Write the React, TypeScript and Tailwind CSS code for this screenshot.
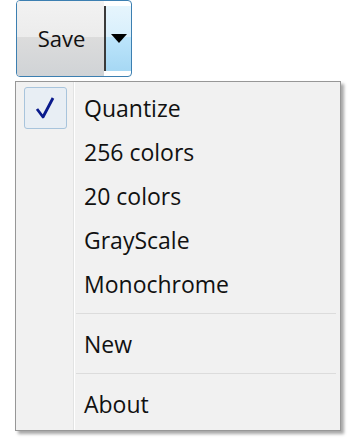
import React from "react";

const items = ["Quantize", "256 colors", "20 colors", "GrayScale", "Monochrome"];

function Item({ label, checked }: { label: string; checked?: boolean }) {
  return (
    <div className="flex h-[44px] items-center">
      <div className="flex w-[57px] shrink-0 items-center justify-center">
        {checked && (
          <div className="ml-[1px] flex h-[42px] w-[43px] items-center justify-center rounded-[3px] border border-[#a8c4dc] bg-[#e8eef4]">
            <svg width="20" height="24" viewBox="0 0 20 24">
              <path
                d="M2 13 L8 21 L18 2"
                fill="none"
                stroke="#0a1a8c"
                strokeWidth="2.8"
                strokeLinejoin="round"
              />
            </svg>
          </div>
        )}
      </div>
      <span className="pl-[11px] text-[23px] leading-none text-[#111]">{label}</span>
    </div>
  );
}

function Separator() {
  return (
    <div className="flex h-[16px] items-center pl-[60px] pr-[4px]">
      <div className="h-[2px] w-full border-t border-[#dcdcdc] border-b-white" />
    </div>
  );
}

export default function App() {
  return (
    <div
      className="relative h-[442px] w-[350px] bg-white"
      style={{ fontFamily: '"Open Sans", "Noto Sans", sans-serif' }}
    >
      <div className="ml-[16px] flex h-[77px] w-[116px] overflow-hidden rounded-[4px] border border-[#3c7fb1] shadow-[inset_0_0_0_1px_rgba(255,255,255,0.7)]">
        <div className="flex w-[87px] items-center justify-center bg-[linear-gradient(to_bottom,#f2f2f2_0%,#ececec_48%,#dcdcdc_48%,#d0d3d6_100%)] pl-[2px] text-[22px] text-[#111]">
          Save
        </div>
        <div className="flex flex-1 items-center py-[5px]">
          <div className="h-full w-[2px] bg-[#3a3a3a]" />
          <div className="flex h-full flex-1 items-center justify-center bg-[linear-gradient(to_bottom,#e6f5fd_0%,#d8effc_48%,#bde5fb_48%,#a6d8f4_100%)]">
            <svg width="16" height="9" viewBox="0 0 16 9">
              <path d="M0 0 H16 L8 9 Z" fill="#000" />
            </svg>
          </div>
        </div>
      </div>

      <div className="absolute left-[15px] top-[81px] w-[326px] border border-[#979797] bg-[#f1f1f1] py-[4px] shadow-[3px_3px_3px_rgba(0,0,0,0.35)]">
        <div className="absolute bottom-0 left-[57px] top-0 w-[2px] border-l border-[#e2e3e3] border-r-white bg-white" />
        <div className="relative">
          {items.map((it, i) => (
            <Item key={it} label={it} checked={i === 0} />
          ))}
          <Separator />
          <Item label="New" />
          <Separator />
          <Item label="About" />
        </div>
      </div>
    </div>
  );
}
